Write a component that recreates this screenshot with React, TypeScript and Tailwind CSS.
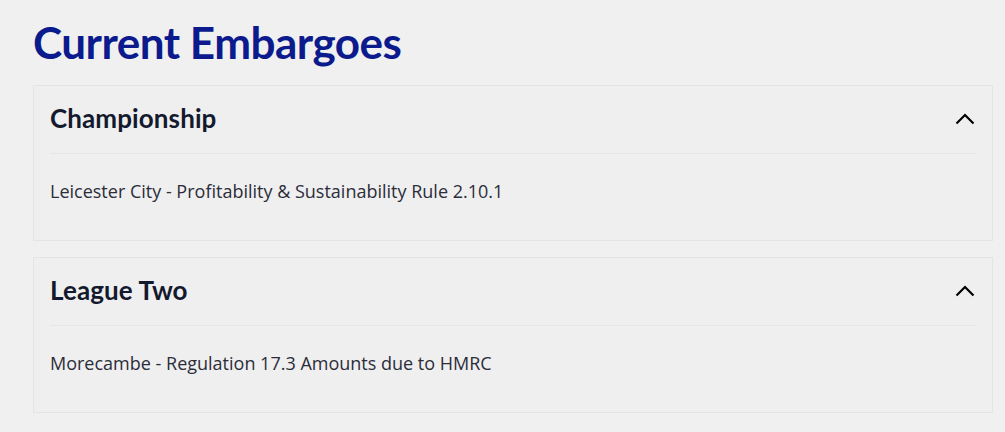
const embargoes = [
  { league: 'Championship', items: ['Leicester City - Profitability & Sustainability Rule 2.10.1'] },
  { league: 'League Two', items: ['Morecambe - Regulation 17.3 Amounts due to HMRC'] },
]

function Chevron() {
  return (
    <svg width="20" height="13" viewBox="0 0 20 13" fill="none" className="mr-[1px] -mt-[2px]">
      <path d="M1.5 11.5 10 3l8.5 8.5" stroke="#000" strokeWidth="2.2" />
    </svg>
  )
}

export default function App() {
  return (
    <div className="min-h-[432px] bg-[#f0f0f0] pl-[33px] pr-[12px] pt-[14px]">
      <h1 className="font-['Lato',sans-serif] text-[44px] font-bold leading-[56px] tracking-[-0.5px] text-[#0b1a8c]">
        Current Embargoes
      </h1>

      <div className="mt-[15px] flex flex-col gap-4">
        {embargoes.map((group) => (
          <section key={group.league} className="border border-[#e4e4e4] bg-[#efefef] px-4">
            <div className="flex h-[68px] items-center justify-between border-b border-[#e6e6e6]">
              <h2 className="-mt-[3px] font-['Lato',sans-serif] text-[26px] font-bold tracking-[0.1px] text-[#141a2e]">{group.league}</h2>
              <Chevron />
            </div>
            <div className="pb-[35px] pt-[24px]">
              {group.items.map((item) => (
                <p key={item} className="font-['Open_Sans',sans-serif] text-[18px] leading-[27px] text-[#2b2d3a]">
                  {item}
                </p>
              ))}
            </div>
          </section>
        ))}
      </div>
    </div>
  )
}
